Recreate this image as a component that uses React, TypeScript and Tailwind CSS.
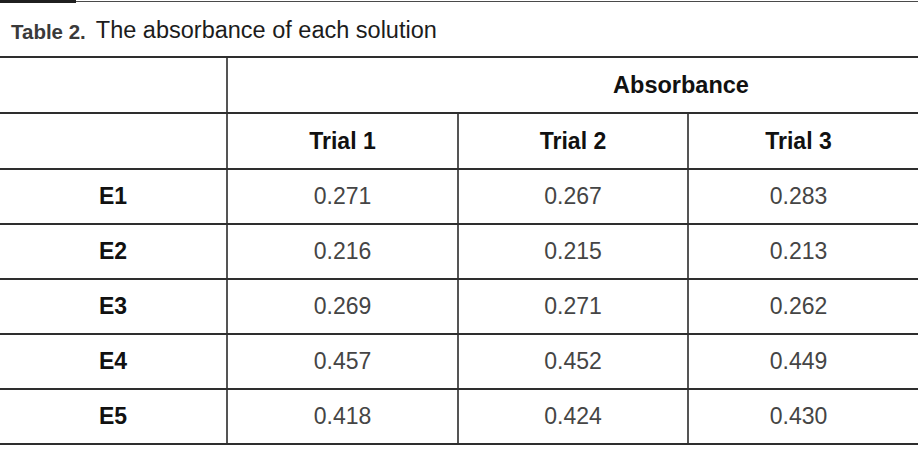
import React from "react";

const rows = [
  { name: "E1", values: ["0.271", "0.267", "0.283"] },
  { name: "E2", values: ["0.216", "0.215", "0.213"] },
  { name: "E3", values: ["0.269", "0.271", "0.262"] },
  { name: "E4", values: ["0.457", "0.452", "0.449"] },
  { name: "E5", values: ["0.418", "0.424", "0.430"] },
];

const grid = "grid grid-cols-[228px_231px_230px_1fr]";
const cell = "flex items-center justify-center border-r-2 border-[#555]";
const lastCell = "flex items-center justify-center";

export default function App() {
  return (
    <div
      className="w-[918px] h-[458px] bg-white overflow-hidden"
      style={{ fontFamily: '"Liberation Sans", Arial, sans-serif' }}
    >
      <div className="flex h-[3px]">
        <div className="w-[76px] h-[3px] bg-[#1f1f1f]" />
        <div className="flex-1 mt-[1px] h-[1px] bg-[#4a4a4a]" />
      </div>
      <div className="h-[55px] flex items-center pl-[11px] pt-[3px] border-b-2 border-[#2e2e2e]">
        <span className="text-[20.5px] font-bold text-[#3a3a3a] mr-[10px] mt-[2px]">Table 2.</span>
        <span className="text-[23.5px] text-[#1c1c1c]">The absorbance of each solution</span>
      </div>

      <div className="grid grid-cols-[228px_1fr] h-[56px] border-b-2 border-[#2e2e2e]">
        <div className={cell} />
        <div className="flex items-center justify-center pl-[216px] pt-[2px] text-[23.5px] font-bold text-[#111]">
          Absorbance
        </div>
      </div>

      <div className={`${grid} h-[56px] border-b-2 border-[#2e2e2e] text-[23px] font-bold text-[#111]`}>
        <div className={cell} />
        <div className={cell}>Trial 1</div>
        <div className={cell}>Trial 2</div>
        <div className={`${lastCell} pr-[10px]`}>Trial 3</div>
      </div>

      {rows.map((r) => (
        <div
          key={r.name}
          className={`${grid} h-[55px] border-b-2 border-[#2e2e2e] text-[23px]`}
        >
          <div className={`${cell} font-bold text-[#111]`}>{r.name}</div>
          <div className={`${cell} text-[#454545]`}>{r.values[0]}</div>
          <div className={`${cell} text-[#454545]`}>{r.values[1]}</div>
          <div className={`${lastCell} pr-[10px] text-[#454545]`}>{r.values[2]}</div>
        </div>
      ))}
    </div>
  );
}
